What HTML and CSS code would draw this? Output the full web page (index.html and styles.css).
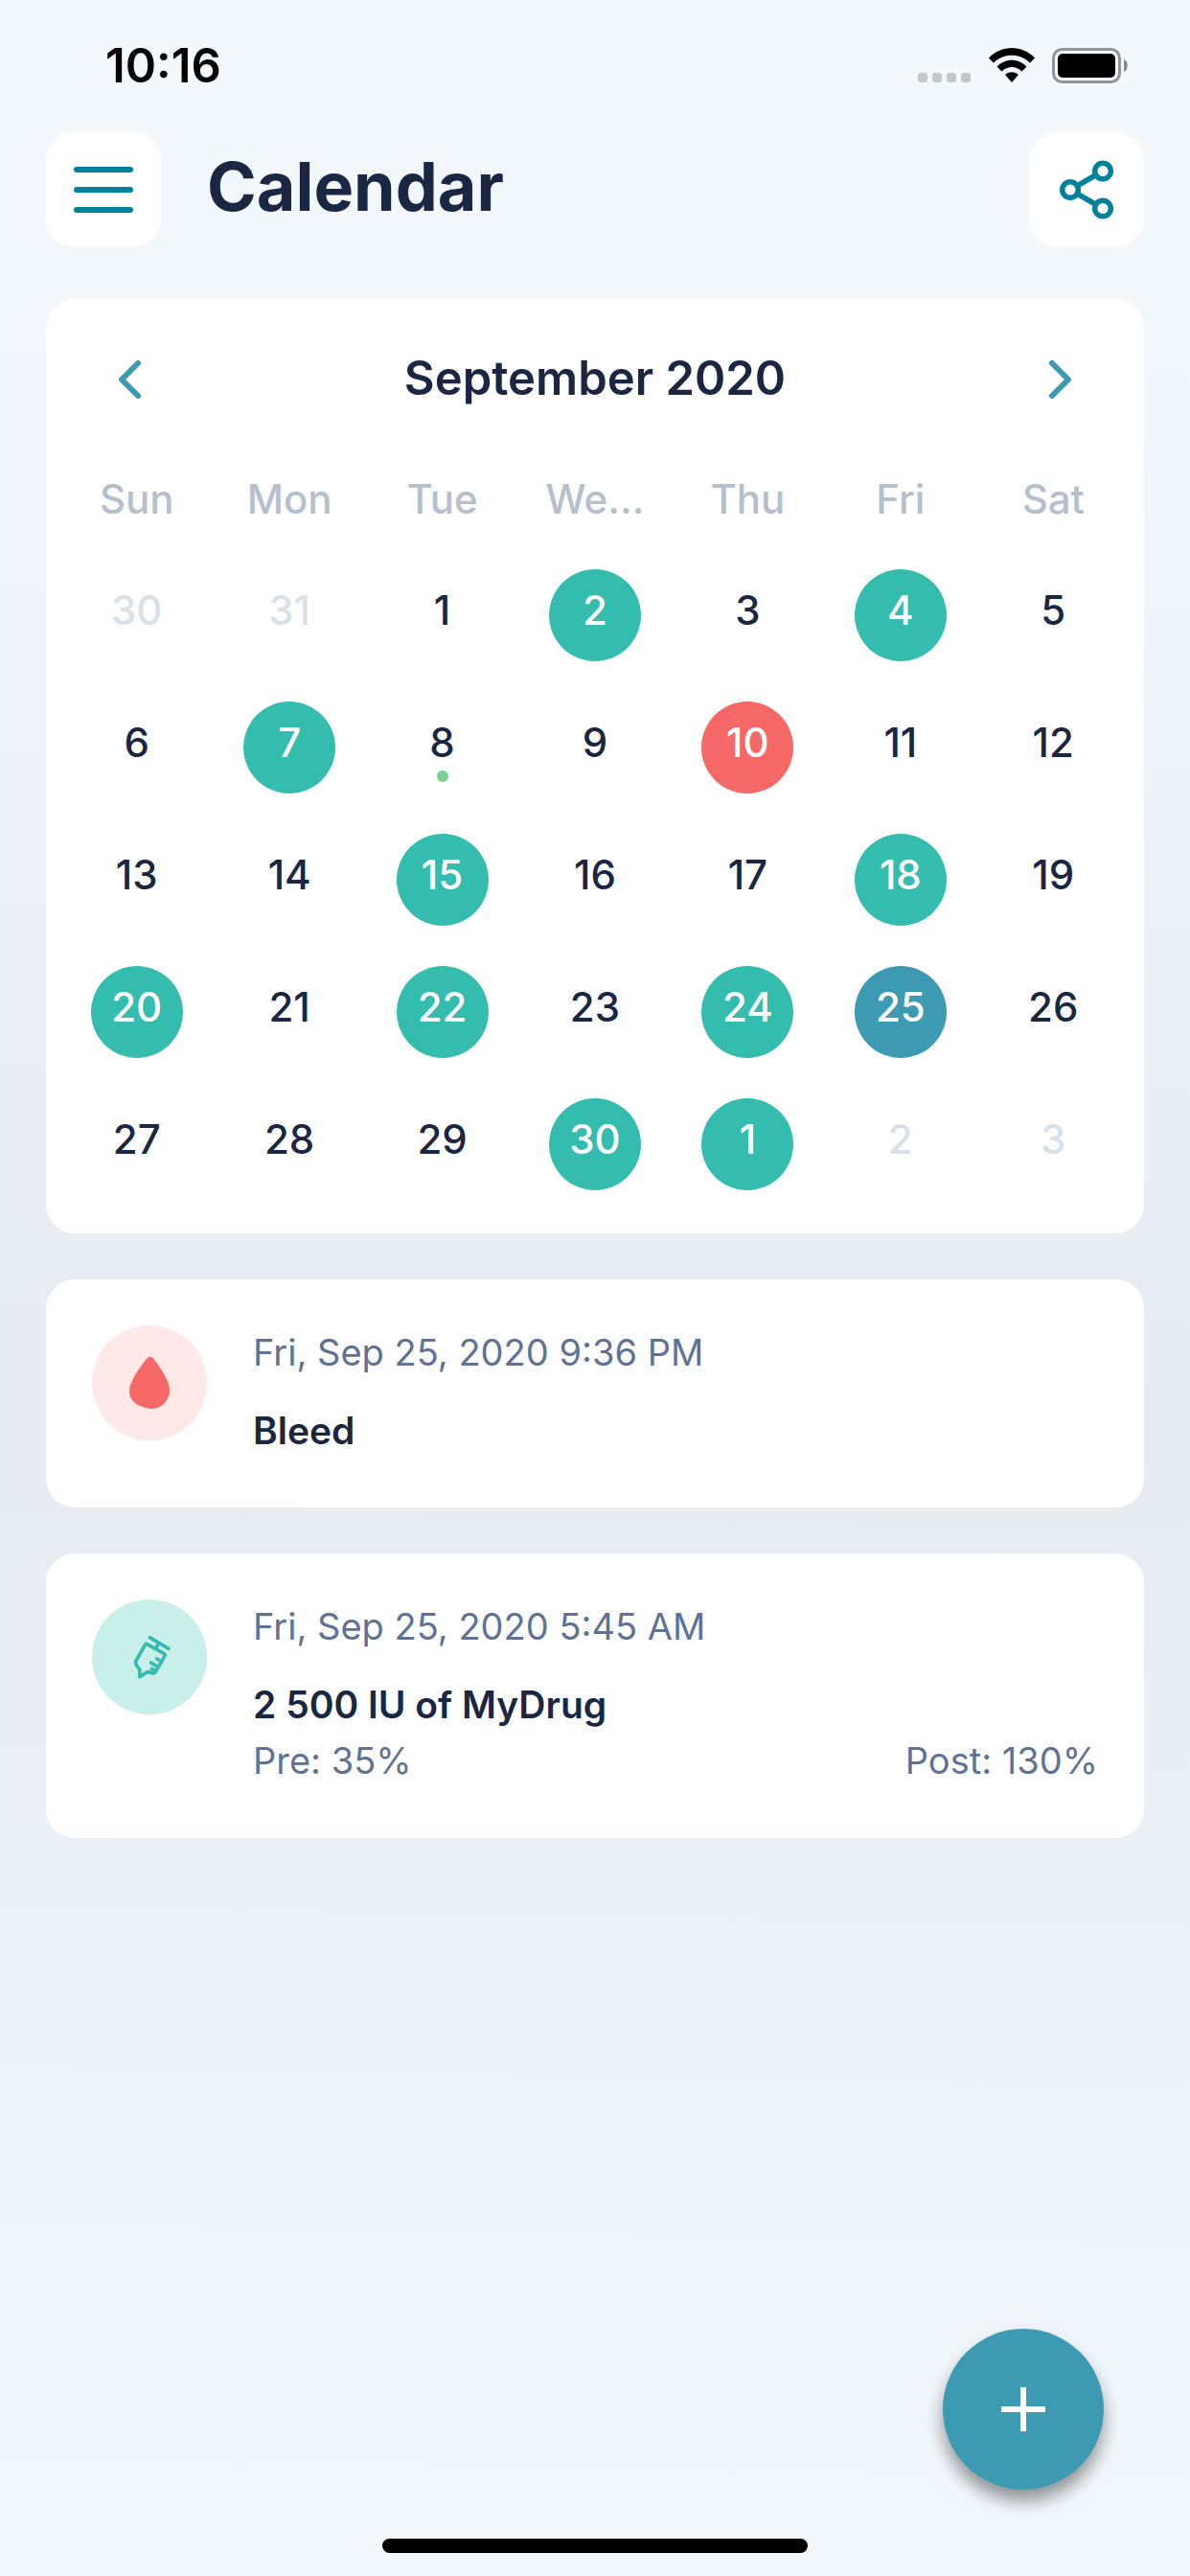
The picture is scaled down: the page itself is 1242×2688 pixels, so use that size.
FILE: index.html
```html
<!DOCTYPE html>
<html lang="en">
<head>
    <meta charset="UTF-8">
    <meta name="viewport" content="width=device-width, initial-scale=1.0">
    <title>Calendar</title>
    <link rel="stylesheet" href="styles.css">
</head>
<body>
    <div class="status-bar">
        <span class="time">10:16</span>
        <div class="status-icons">
            <svg class="signal" width="56" height="37" viewBox="0 0 56 37" fill="#c3c6cb">
                <rect x="0" y="26" width="10" height="10" rx="3"/>
                <rect x="15" y="26" width="10" height="10" rx="3"/>
                <rect x="30" y="26" width="10" height="10" rx="3"/>
                <rect x="45" y="26" width="10" height="10" rx="3"/>
            </svg>
            <svg class="wifi" width="48" height="37" viewBox="0 0 48 37">
                <path d="M0 10.500C13-3.500 35-3.500 48 10.500L43 15.500C32.500 5 15.500 5 5 15.500Z"/>
                <path d="M8.500 19.500C17 10.500 31 10.500 39.500 19.500L34.500 24.500C28.500 18.500 19.500 18.500 13.500 24.500Z"/>
                <path d="M17 28C21 24.300 27 24.300 31 28L24 36Z"/>
            </svg>
            <svg class="battery" width="80" height="37" viewBox="0 0 80 37">
                <rect x="1.500" y="1.500" width="69" height="34" rx="9" fill="none" stroke="#919599" stroke-width="3"/>
                <rect x="6" y="6" width="60" height="25" rx="5"/>
                <path d="M75 12C80 14 80 23 75 25Z" fill="#85888b"/>
            </svg>
        </div>
    </div>

    <header class="header">
        <button class="icon-button" type="button" aria-label="Menu">
            <svg width="120" height="120" viewBox="0 0 120 120" stroke-width="6" stroke-linecap="round">
                <path d="M32 39H88M32 60H88M32 81H88"/>
            </svg>
        </button>
        <h1>Calendar</h1>
        <button class="icon-button" type="button" aria-label="Share">
            <svg width="120" height="120" viewBox="0 0 120 120" fill="none" stroke-width="5.500">
                <circle cx="43" cy="60" r="8.300"/>
                <circle cx="77" cy="40.500" r="8.300"/>
                <circle cx="77" cy="79.500" r="8.300"/>
                <path d="M50 56L70 44.500M50 64L70 75.500"/>
            </svg>
        </button>
    </header>

    <main>
        <section class="card calendar">
            <div class="month">
                <button class="arrow" type="button" aria-label="Previous month">
                    <svg width="24" height="40" viewBox="0 0 24 40"><path d="M21 3L4 20L21 37"/></svg>
                </button>
                <h2>September 2020</h2>
                <button class="arrow" type="button" aria-label="Next month">
                    <svg width="24" height="40" viewBox="0 0 24 40"><path d="M3 3L20 20L3 37"/></svg>
                </button>
            </div>
            <table class="days">
                <thead>
                    <tr><th>Sun</th><th>Mon</th><th>Tue</th><th>We…</th><th>Thu</th><th>Fri</th><th>Sat</th></tr>
                </thead>
                <tbody>
                    <tr>
                        <td><button class="day outside">30</button></td>
                        <td><button class="day outside">31</button></td>
                        <td><button class="day">1</button></td>
                        <td><button class="day treatment">2</button></td>
                        <td><button class="day">3</button></td>
                        <td><button class="day treatment">4</button></td>
                        <td><button class="day">5</button></td>
                    </tr>
                    <tr>
                        <td><button class="day">6</button></td>
                        <td><button class="day treatment">7</button></td>
                        <td><button class="day marked">8</button></td>
                        <td><button class="day">9</button></td>
                        <td><button class="day bleed">10</button></td>
                        <td><button class="day">11</button></td>
                        <td><button class="day">12</button></td>
                    </tr>
                    <tr>
                        <td><button class="day">13</button></td>
                        <td><button class="day">14</button></td>
                        <td><button class="day treatment">15</button></td>
                        <td><button class="day">16</button></td>
                        <td><button class="day">17</button></td>
                        <td><button class="day treatment">18</button></td>
                        <td><button class="day">19</button></td>
                    </tr>
                    <tr>
                        <td><button class="day treatment">20</button></td>
                        <td><button class="day">21</button></td>
                        <td><button class="day treatment">22</button></td>
                        <td><button class="day">23</button></td>
                        <td><button class="day treatment">24</button></td>
                        <td><button class="day selected">25</button></td>
                        <td><button class="day">26</button></td>
                    </tr>
                    <tr>
                        <td><button class="day">27</button></td>
                        <td><button class="day">28</button></td>
                        <td><button class="day">29</button></td>
                        <td><button class="day treatment">30</button></td>
                        <td><button class="day treatment">1</button></td>
                        <td><button class="day outside">2</button></td>
                        <td><button class="day outside">3</button></td>
                    </tr>
                </tbody>
            </table>
        </section>

        <article class="card entry">
            <svg class="entry-icon icon-bleed" viewBox="108 129 360 360">
                <path d="M291 227C296 227 298 229 303 236C325 266 351 303 351 332C351 366 324 390 292 390C280 390 272 386 262 382C240 374 225 358 225 335C225 304 258 260 279 234C284 228 287 227 291 227Z"/>
            </svg>
            <div class="entry-body">
                <p class="date">Fri, Sep 25, 2020 9:36 PM</p>
                <h3>Bleed</h3>
            </div>
        </article>

        <article class="card entry">
            <svg class="entry-icon icon-treatment" viewBox="-42 -33 360 360">
                <path d="M139 86L198 121M167 104L158 120"/>
                <path d="M129 106L183 136Q188 139 185 145L157 194Q154 199 148 198L137 194Q130 193 125 198L107 209L108 194Q109 187 104 182L98 174Q92 165 98 155L125 108Q127 105 129 106Z"/>
                <path d="M173 160L161 153M161 176L143 165M155 190L145 184"/>
            </svg>
            <div class="entry-body">
                <p class="date">Fri, Sep 25, 2020 5:45 AM</p>
                <h3>2 500 IU of MyDrug</h3>
                <div class="levels">
                    <span>Pre: 35%</span>
                    <span>Post: 130%</span>
                </div>
            </div>
        </article>
    </main>

    <button class="add-button" type="button" aria-label="Add entry">
        <svg width="46" height="46" viewBox="0 0 46 46"><path d="M0 23H46M23 0V46"/></svg>
    </button>
    <div class="home-indicator"></div>
</body>
</html>
```
FILE: styles.css
```css
* {
    box-sizing: border-box;
}
body {
    margin: 0;
    min-height: 100vh;
    padding: 0 48px;
    font-family: Inter, "Liberation Sans", sans-serif;
    color: #1a2642;
    background: linear-gradient(181deg, #f3f8fd 10%, #e6ebf1 55%, #f3f8fc 100%);
}
h1, h2, h3, p {
    margin: 0;
}
button {
    padding: 0;
    border: none;
    background: none;
    font-family: inherit;
    color: inherit;
    cursor: pointer;
}
svg {
    display: block;
}

/* Status bar */
.status-bar {
    display: flex;
    align-items: center;
    justify-content: space-between;
    height: 138px;
    padding: 0 16px 2px 62px;
}
.time {
    font-size: 49px;
    font-weight: 600;
    color: #000;
}
.status-icons {
    display: flex;
    gap: 18px;
}

/* Header */
.header {
    display: flex;
    align-items: center;
    gap: 48px;
    margin-bottom: 54px;
}
.header h1 {
    flex: 1;
    padding-bottom: 8px;
    font-size: 70px;
    font-weight: 700;
}
.icon-button {
    background: #fff;
    border-radius: 30px;
    stroke: #00829b;
}

/* Cards */
.card {
    margin-bottom: 48px;
    background: #fff;
    border-radius: 30px;
}

/* Calendar */
.calendar {
    padding: 48px 15px 24px;
}
.month {
    display: flex;
    align-items: center;
    justify-content: space-between;
    height: 72px;
    padding: 0 60px;
}
.month h2 {
    padding-bottom: 4px;
    font-size: 49px;
    font-weight: 600;
}
.arrow svg {
    fill: none;
    stroke: #3c9bb2;
    stroke-width: 6;
    stroke-linecap: round;
    stroke-linejoin: round;
}
.days {
    width: 100%;
    margin-top: 57px;
    border-collapse: collapse;
    table-layout: fixed;
}
.days th {
    height: 84px;
    padding: 0 0 20px;
    font-size: 42px;
    font-weight: 500;
    line-height: 64px;
    color: #b5c0cf;
}
.days td {
    padding: 21px 0;
}
.day {
    position: relative;
    display: block;
    width: 96px;
    height: 96px;
    margin: 0 auto;
    padding-bottom: 12px;
    border-radius: 50%;
    font-size: 42px;
    font-weight: 500;
}
.outside {
    color: #d9e1e8;
}
.treatment, .bleed, .selected {
    color: #fff;
}
.treatment { background: #34bcae; }
.bleed { background: #f66767; }
.selected { background: #3c9bb2; }
.marked::after {
    content: "";
    position: absolute;
    left: 42px;
    bottom: 12px;
    width: 12px;
    height: 12px;
    border-radius: 50%;
    background: #7ad08b;
}

/* Entries */
.entry {
    display: flex;
    align-items: flex-start;
    gap: 48px;
    padding: 48px 48px 51px;
    font-size: 38px;
    line-height: 59px;
}
.entry-icon {
    flex: none;
    width: 120px;
    height: 120px;
    border-radius: 50%;
}
.icon-bleed {
    background: #ffe8e8;
    fill: #f66767;
}
.icon-treatment {
    background: #c8efea;
    fill: none;
    stroke: #34bcae;
    stroke-width: 11;
    stroke-linecap: round;
    stroke-linejoin: round;
}
.entry-body {
    flex: 1;
}
.entry h3 {
    font-size: 39px;
    font-weight: 600;
}
.date {
    margin-bottom: 24px;
    line-height: 56px;
    color: #5f7294;
}
.levels {
    display: flex;
    justify-content: space-between;
    color: #5f7294;
}

/* Floating button */
.add-button {
    position: fixed;
    right: 90px;
    bottom: 90px;
    display: flex;
    align-items: center;
    justify-content: center;
    width: 168px;
    height: 168px;
    border-radius: 50%;
    background: #3c9bb2;
    box-shadow: 0 12px 18px rgba(0, 0, 0, 0.4);
}
.add-button svg {
    stroke: #fff;
    stroke-width: 6;
}
.home-indicator {
    position: fixed;
    left: 50%;
    bottom: 24px;
    width: 444px;
    height: 15px;
    margin-left: -222px;
    border-radius: 8px;
    background: #000;
}
```
